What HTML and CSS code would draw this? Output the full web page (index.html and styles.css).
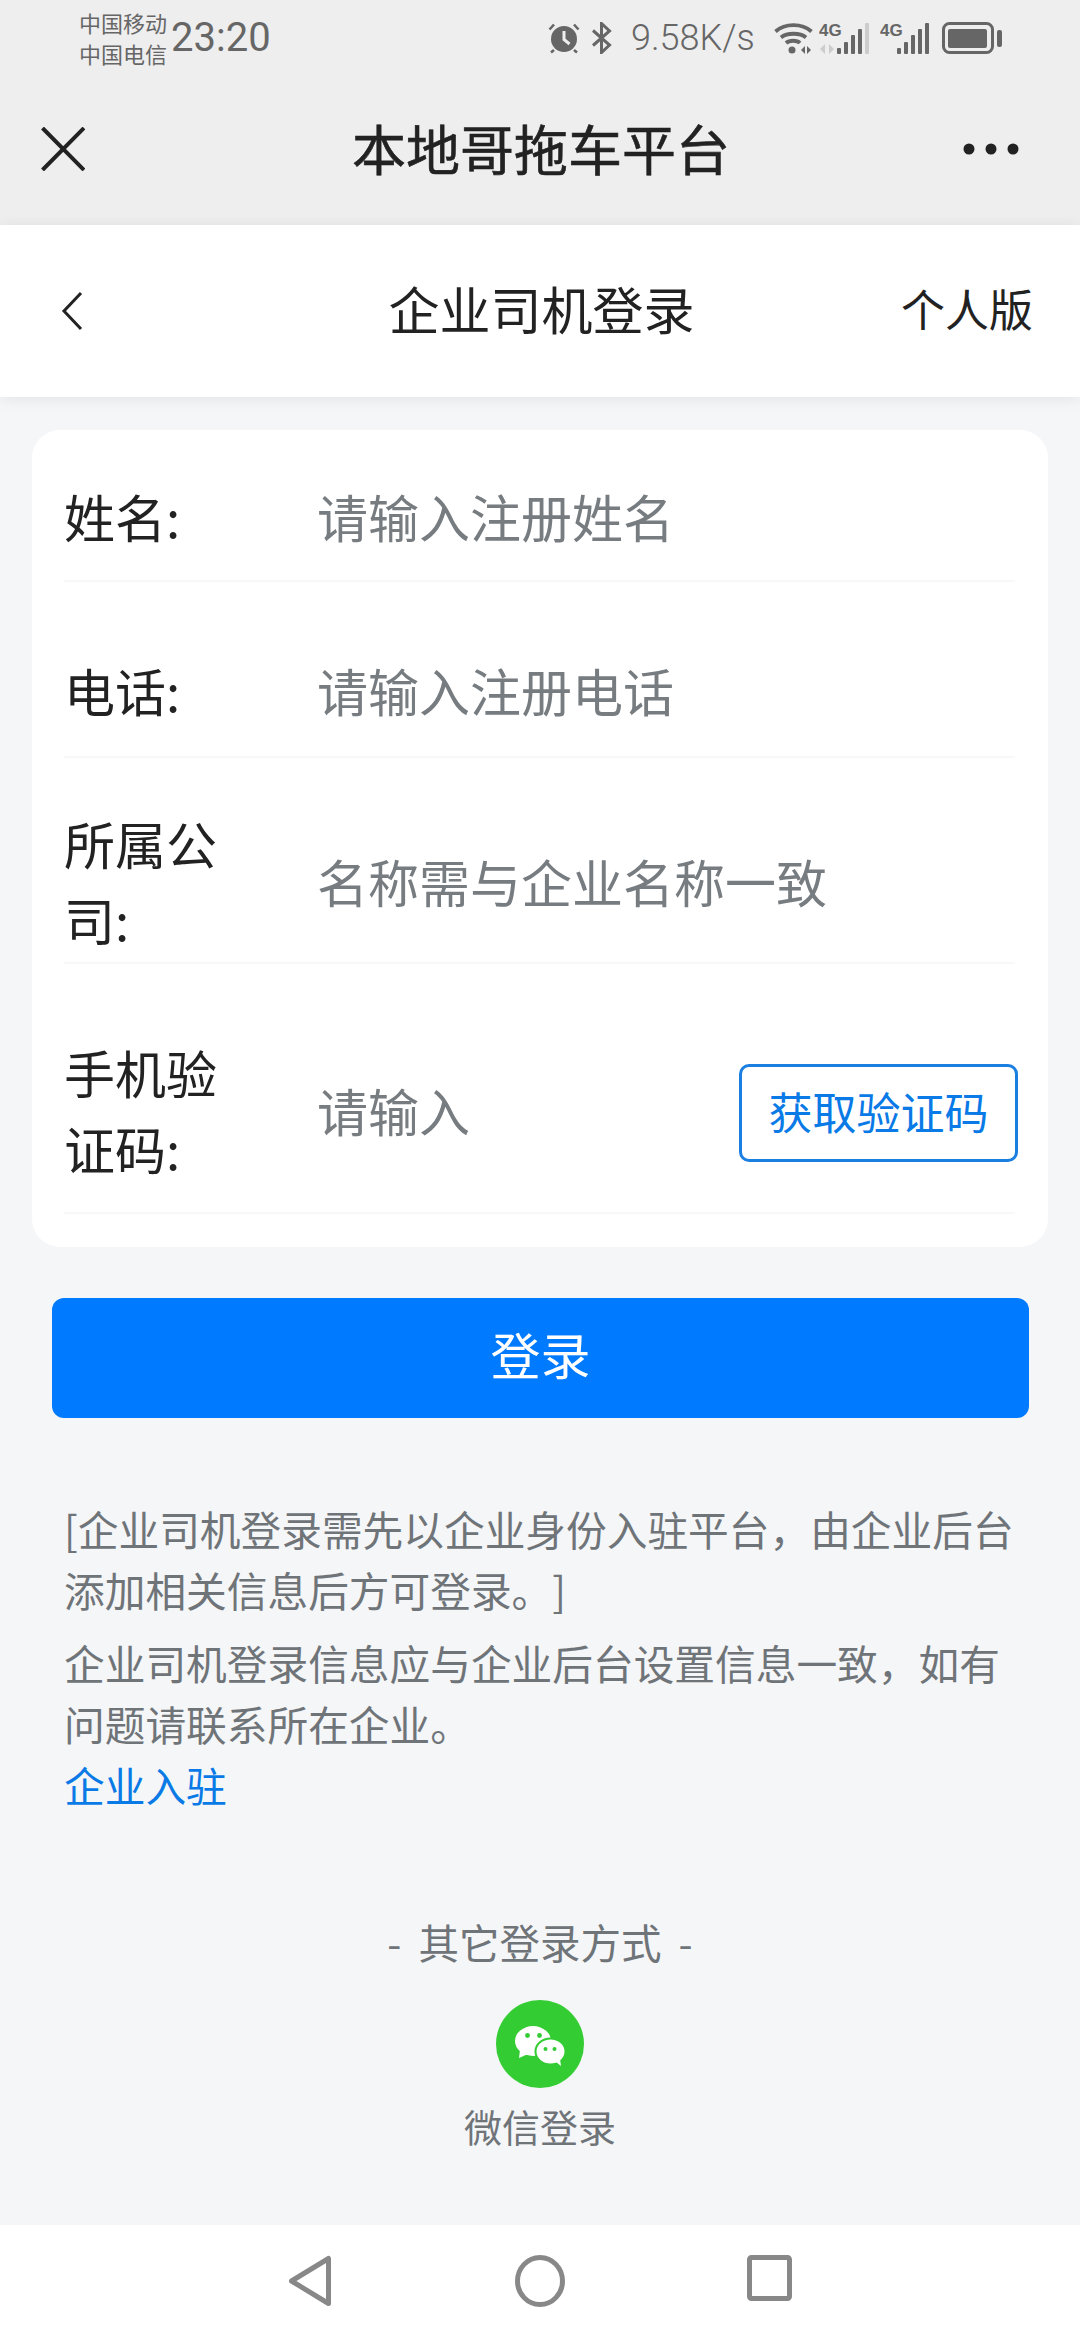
FILE: index.html
```html
<!DOCTYPE html>
<html lang="zh-CN">
<head>
    <meta charset="UTF-8">
    <meta name="viewport" content="width=device-width, initial-scale=1.0">
    <title>企业司机登录</title>
    <link rel="stylesheet" href="styles.css">
</head>
<body>
<div class="page">
    <!-- Status bar -->
    <div class="statusbar">
        <div class="carriers">
            <span>中国移动</span>
            <span>中国电信</span>
        </div>
        <span class="clock">23:20</span>
        <div class="status-icons">
            <svg class="icon-alarm" width="32" height="32" viewBox="0 0 32 32">
                <circle cx="16" cy="17" r="13" fill="#666"/>
                <path d="M16 9v8.5l5.5 4.5" fill="none" stroke="#eee" stroke-width="3"/>
                <path d="M1.5 7.5 6 2.5M30.5 7.5 26 2.5M6 28l-3 2.5M26 28l3 2.5" fill="none" stroke="#666" stroke-width="2.6"/>
            </svg>
            <svg class="icon-bt" width="22" height="32" viewBox="0 0 22 32">
                <path d="M2 8.5 18.5 23 10.5 30.5V1.5L18.5 9 2 23.5" fill="none" stroke="#666" stroke-width="3"/>
            </svg>
            <span class="speed">9.58K/s</span>
            <svg class="icon-wifi" width="39" height="32" viewBox="0 0 39 32">
                <path d="M1.5 9.5C11 1 28 1 37.5 9.5" fill="none" stroke="#666" stroke-width="3.8"/>
                <path d="M7 15.500C13 10.500 26 10.500 32 15.500" fill="none" stroke="#666" stroke-width="3.8"/>
                <path d="M12 21C15.500 18 23 18 26 21" fill="none" stroke="#666" stroke-width="3.800"/>
                <circle cx="18" cy="28" r="3.500" fill="#666"/>
                <path d="M27 28l4-4v8zM33 24l4 4-4 4z" fill="#666"/>
            </svg>
            <svg class="icon-sig1" width="50" height="32" viewBox="0 0 50 32">
                <text class="sig-label" x="0" y="14">4G</text>
                <path d="M1 27l5-5v10zM10 22l5 5-5 5z" fill="#ccc"/>
                <rect x="18" y="26" width="4" height="6" rx="1" fill="#666"/>
                <rect x="25" y="20" width="4" height="12" rx="1" fill="#666"/>
                <rect x="32" y="13" width="4" height="19" rx="1" fill="#666"/>
                <rect x="39" y="7" width="4" height="25" rx="1" fill="#666"/>
                <rect x="46" y="1" width="4" height="31" rx="1" fill="#ccc"/>
            </svg>
            <svg class="icon-sig2" width="50" height="32" viewBox="0 0 50 32">
                <text class="sig-label" x="0" y="14">4G</text>
                <rect x="17" y="26" width="4" height="6" rx="1" fill="#666"/>
                <rect x="24" y="20" width="4" height="12" rx="1" fill="#666"/>
                <rect x="31" y="13" width="4" height="19" rx="1" fill="#666"/>
                <rect x="38" y="7" width="4" height="25" rx="1" fill="#666"/>
                <rect x="45" y="1" width="4" height="31" rx="1" fill="#666"/>
            </svg>
            <svg class="icon-battery" width="60" height="32" viewBox="0 0 60 32">
                <rect x="1.500" y="1.500" width="49" height="29" rx="6" fill="none" stroke="#666" stroke-width="3"/>
                <rect x="6" y="7" width="39" height="19" rx="2" fill="#666"/>
                <rect x="55" y="8" width="5" height="17" rx="2" fill="#666"/>
            </svg>
        </div>
    </div>

    <!-- WeChat title bar -->
    <header class="wx-bar">
        <svg width="44" height="44" viewBox="0 0 44 44">
            <path d="M1.500 1 43 43M43 1 1.500 43" fill="none" stroke="#222" stroke-width="4"/>
        </svg>
        <h1 class="wx-title">本地哥拖车平台</h1>
        <svg width="56" height="12" viewBox="0 0 56 12">
            <circle cx="6" cy="6" r="5.500" fill="#222"/>
            <circle cx="28" cy="6" r="5.500" fill="#222"/>
            <circle cx="50" cy="6" r="5.500" fill="#222"/>
        </svg>
    </header>

    <!-- Page nav -->
    <nav class="subnav">
        <svg width="22" height="40" viewBox="0 0 22 40">
            <path d="M20 2 3 20l17 18" fill="none" stroke="#222" stroke-width="3"/>
        </svg>
        <h2 class="subnav-title">企业司机登录</h2>
        <a class="subnav-link">个人版</a>
    </nav>

    <main class="content">
        <!-- Login form -->
        <form class="card">
            <div class="row row-first">
                <span class="row-label">姓名:</span>
                <span class="row-field">请输入注册姓名</span>
            </div>
            <div class="row">
                <span class="row-label">电话:</span>
                <span class="row-field">请输入注册电话</span>
            </div>
            <div class="row row-company">
                <span class="row-label">所属公司:</span>
                <span class="row-field">名称需与企业名称一致</span>
            </div>
            <div class="row row-code">
                <span class="row-label">手机验证码:</span>
                <span class="row-field">请输入</span>
                <button type="button" class="code-btn">获取验证码</button>
            </div>
        </form>

        <button type="button" class="login-btn">登录</button>

        <div class="notes">
            <p>[企业司机登录需先以企业身份入驻平台，由企业后台添加相关信息后方可登录。]</p>
            <p>企业司机登录信息应与企业后台设置信息一致，如有问题请联系所在企业。</p>
            <a class="notes-link">企业入驻</a>
        </div>

        <div class="other">
            <div class="other-title">- 其它登录方式 -</div>
            <svg class="wechat" width="88" height="88" viewBox="0 0 88 88">
                <circle cx="44" cy="44" r="44" fill="#33cc33"/>
                <ellipse cx="37" cy="41" rx="18" ry="15" fill="#fff"/>
                <path d="M24 50l-1 8 9-4z" fill="#fff"/>
                <ellipse cx="54.500" cy="51.500" rx="15" ry="13" fill="#fff" stroke="#33cc33" stroke-width="2"/>
                <path d="M60 62l5 4-1-7z" fill="#fff"/>
                <circle cx="31.500" cy="35.500" r="2.400" fill="#33cc33"/>
                <circle cx="43.500" cy="35.500" r="2.400" fill="#33cc33"/>
                <circle cx="49.500" cy="49" r="2" fill="#33cc33"/>
                <circle cx="58.500" cy="49" r="2" fill="#33cc33"/>
            </svg>
            <div class="other-name">微信登录</div>
        </div>
    </main>

    <!-- System nav -->
    <div class="sysnav">
        <svg width="44" height="52" viewBox="0 0 44 52">
            <path d="M40.500 3.500V48.500L3.500 26z" fill="none" stroke="#888" stroke-width="5" stroke-linejoin="round"/>
        </svg>
        <svg width="50" height="52" viewBox="0 0 50 52">
            <ellipse cx="25" cy="26" rx="22.500" ry="23.500" fill="none" stroke="#888" stroke-width="5"/>
        </svg>
        <svg width="45" height="46" viewBox="0 0 45 46">
            <rect x="2.500" y="2.500" width="40" height="41" rx="2" fill="none" stroke="#888" stroke-width="5"/>
        </svg>
    </div>
</div>
</body>
</html>
```

FILE: styles.css
```css
/* General Reset */
* {
    box-sizing: border-box;
}

body {
    margin: 0;
    font-family: "Noto Sans CJK SC", "Noto Sans", sans-serif;
    background: #f5f6f7;
}

h1, h2, p {
    margin: 0;
    font-weight: normal;
}

.page {
    width: 1080px;
    height: 2340px;
    display: flex;
    flex-direction: column;
    overflow: hidden;
}

/* Status bar */
.statusbar {
    height: 75px;
    padding: 0 78px 0 79px;
    background: #eeeeee;
    color: #666;
    display: flex;
    align-items: center;
}

.carriers {
    display: flex;
    flex-direction: column;
    font-size: 22px;
    line-height: 31px;
}

.clock {
    margin-left: 4px;
    font-family: Roboto, sans-serif;
    font-size: 40px;
}

.status-icons {
    margin-left: auto;
    display: flex;
    align-items: center;
}

.speed {
    width: 119px;
    margin: 0 24px 0 18px;
    font-family: Roboto, sans-serif;
    font-size: 36px;
    font-weight: 300;
    white-space: nowrap;
}

.icon-bt {
    margin-left: 11px;
}

.icon-sig1 {
    margin-left: 6px;
}

.icon-sig2 {
    margin-left: 11px;
}

.icon-battery {
    margin-left: 12px;
}

.sig-label {
    font-family: "Liberation Sans Narrow", "Liberation Sans", sans-serif;
    font-size: 17px;
    font-weight: bold;
    fill: #666;
}

/* WeChat title bar */
.wx-bar {
    height: 150px;
    padding: 0 61px 2px 41px;
    background: #eeeeee;
    display: flex;
    align-items: center;
    justify-content: space-between;
}

.wx-title {
    margin: 0 0 4px 34px;
    font-size: 54px;
    color: #222;
    -webkit-text-stroke: 0.6px #222;
}

/* Page nav */
.subnav {
    height: 172px;
    padding: 0 47px 0 61px;
    background: #fff;
    box-shadow: 0 2px 14px rgba(0, 0, 0, 0.08);
    display: flex;
    align-items: center;
    justify-content: space-between;
    position: relative;
}

.subnav-title {
    margin: 0 0 6px 99px;
    font-size: 51px;
    color: #222;
}

.subnav-link {
    margin-bottom: 6px;
    font-size: 44px;
    color: #222;
}

/* Main content */
.content {
    flex: 1;
    padding-top: 33px;
}

.card {
    margin: 0 32px;
    padding: 0 33px 33px 32px;
    background: #fff;
    border-radius: 28px;
}

.row {
    padding: 70px 0 28px;
    border-bottom: 2px solid #f8f8f8;
    display: flex;
    align-items: center;
    font-size: 51px;
    line-height: 76px;
}

.row-first {
    padding: 48px 0 26px;
}

.row-company {
    padding: 47px 0 5px;
}

.row-code {
    padding: 70px 0 26px;
}

.row-label {
    width: 160px;
    margin-right: 93px;
    color: #222;
    flex-shrink: 0;
}

.row-field {
    flex: 1;
    color: #777c80;
}

.code-btn {
    width: 279px;
    height: 98px;
    margin: 6px -3px 0 0;
    padding: 0 0 4px;
    background: #fff;
    border: 3px solid #1a7fe0;
    border-radius: 10px;
    font-family: inherit;
    font-size: 44px;
    color: #0a7ae6;
}

.login-btn {
    display: block;
    width: 977px;
    height: 120px;
    margin: 51px 0 0 52px;
    padding: 0 0 10px;
    background: #007aff;
    border: none;
    border-radius: 12px;
    font-family: inherit;
    font-size: 50px;
    color: #fff;
}

/* Notes */
.notes {
    margin: 80px 50px 0 64px;
    font-size: 40.7px;
    line-height: 61px;
    color: #6f7479;
    text-spacing-trim: space-all;
}

.notes p {
    margin-bottom: 12px;
}

.notes p:last-of-type {
    margin-bottom: 0;
}

.notes-link {
    color: #0a7ae6;
}

/* Other login methods */
.other {
    margin-top: 97px;
    display: flex;
    flex-direction: column;
    align-items: center;
    color: #6f7479;
}

.other-title {
    font-size: 40.5px;
    line-height: 60px;
    word-spacing: 8px;
}

.wechat {
    margin-top: 28px;
}

.other-name {
    margin-top: 13px;
    font-size: 38px;
    line-height: 50px;
}

/* System nav */
.sysnav {
    height: 115px;
    padding: 30px 288px 0 288px;
    background: #fff;
    display: flex;
    align-items: flex-start;
    justify-content: space-between;
}
```
